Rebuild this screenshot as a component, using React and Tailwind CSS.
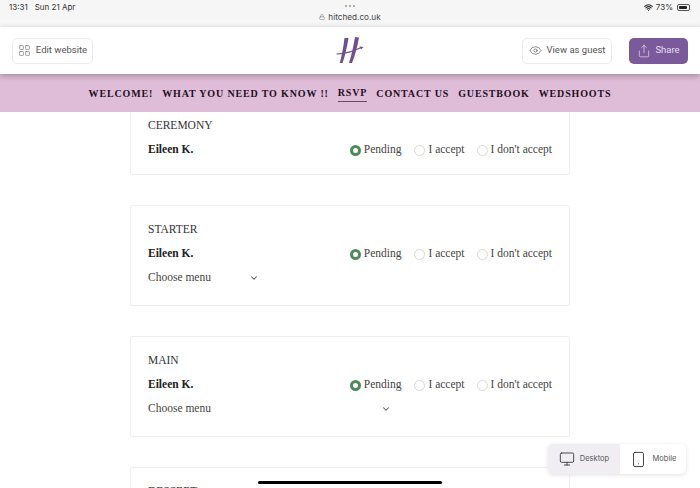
import React from "react";
import { LayoutGrid, Eye, Share, Monitor, Smartphone, ChevronDown, Lock, Wifi } from "lucide-react";

const serif = "font-['Liberation_Serif',_serif]";

function Radio({ label, checked, className = "" }) {
  return (
    <div className={`flex items-center gap-[3px] ${className}`}>
      {checked ? (
        <span className="w-[11px] h-[11px] rounded-full border-[3px] border-[#4f8a5b] bg-white" />
      ) : (
        <span className="w-[11px] h-[11px] rounded-full border border-[#d8d8d8] bg-white" />
      )}
      <span className="text-[11.5px] leading-none text-[#444]">{label}</span>
    </div>
  );
}

function Card({ title, row = true, menu, chevron, className = "" }) {
  return (
    <section className={`w-[440px] mx-auto bg-white border border-[#efefef] rounded-[2px] px-[17px] shrink-0 ${className}`}>
      <h3 className="h-[14px] flex items-center text-[11.5px] leading-none text-[#333]">{title}</h3>
      {row && (
        <div className="mt-[10px] h-[14px] flex items-center justify-between">
          <span className="text-[11.5px] font-bold leading-none text-[#222]">Eileen K.</span>
          <div className="flex items-center">
            <Radio label="Pending" checked />
            <Radio label="I accept" className="ml-[13px]" />
            <Radio label="I don't accept" className="ml-[12px]" />
          </div>
        </div>
      )}
      {menu && (
        <div className="mt-[10px] h-[14px] flex items-center text-[11.5px] leading-none text-[#444]" style={{ width: chevron }}>
          <span className="flex-1">Choose menu</span>
          <ChevronDown size={10} strokeWidth={2.5} className="text-[#555]" />
        </div>
      )}
    </section>
  );
}

function Logo() {
  return (
    <svg width="28" height="28" viewBox="0 0 28 28" fill="none">
      <path d="M8.5 2 L12.5 2 C11 11 9 20 6.5 27 L3.8 27 C6 19 7.5 10 8.5 2 Z" fill="#6f4f94" />
      <path d="M19 1 L23 1.5 C21.5 10 19 20 16 27 L13 27 C15.5 19 17.5 10 19 1 Z" fill="#6f4f94" />
      <path d="M1 18 C9 17.5 18 15 24 12" stroke="#6f4f94" strokeWidth="1.2" strokeLinecap="round" />
      <path d="M23.5 10.5 L27.5 11 L25 13.5 Z" fill="#6f4f94" />
    </svg>
  );
}

const navItems = ["WELCOME!", "WHAT YOU NEED TO KNOW !!", "RSVP", "CONTACT US", "GUESTBOOK", "WEDSHOOTS"];

export default function App() {
  return (
    <div className={`relative w-[700px] h-[488px] overflow-hidden bg-white flex flex-col font-['Inter',_sans-serif]`}>
      <div className="relative h-[27px] shrink-0 bg-[#f6f6f6] flex items-start justify-between pl-[9px] pr-[10px] pt-[3px] text-[8px] leading-[9px] text-[#333]">
        <div className="flex gap-[7px]">
          <span>13:31</span>
          <span>Sun 21 Apr</span>
        </div>
        <div className="flex flex-col items-center absolute left-0 right-0 top-[5px]">
          <div className="flex gap-[2px] mb-[5px]">
            <i className="w-[2px] h-[2px] rounded-full bg-[#999]" />
            <i className="w-[2px] h-[2px] rounded-full bg-[#999]" />
            <i className="w-[2px] h-[2px] rounded-full bg-[#999]" />
          </div>
          <div className="flex items-center gap-[3px] text-[8.2px] leading-[10px] text-[#444]">
            <Lock size={6} className="text-[#777]" />
            <span>hitched.co.uk</span>
          </div>
        </div>
        <div className="flex items-center gap-[3px] relative">
          <Wifi size={9} strokeWidth={3} />
          <span>73%</span>
          <span className="w-[13px] h-[7px] rounded-[2px] border border-[#555] p-[1px] flex ml-[1px]">
            <span className="w-[8px] bg-[#222] rounded-[1px]" />
          </span>
        </div>
      </div>

      <header className="relative z-20 h-[47px] shrink-0 bg-white flex items-center justify-between px-[12px] shadow-[0_2px_6px_rgba(60,40,60,0.35)] font-['Roboto',_sans-serif]">
        <button className="h-[26px] w-[81px] rounded-[5px] border border-[#ececec] flex items-center justify-center gap-[5px] text-[9.5px] text-[#555]">
          <LayoutGrid size={13} strokeWidth={1} />
          <span>Edit website</span>
        </button>
        <div className="absolute left-[336px] top-[9px]"><Logo /></div>
        <div className="flex items-center gap-[17px]">
          <button className="h-[26px] w-[90px] rounded-[5px] border border-[#ececec] flex items-center justify-center gap-[5px] text-[9.5px] text-[#555]">
            <Eye size={13} strokeWidth={1.2} />
            <span>View as guest</span>
          </button>
          <button className="h-[26px] w-[59px] rounded-[5px] bg-[#7a5a9b] flex items-center justify-center gap-[4px] text-[9.5px] text-[#e6dfee]">
            <Share size={14} strokeWidth={1.2} />
            <span>Share</span>
          </button>
        </div>
      </header>

      <nav className={`relative z-10 h-[38px] shrink-0 bg-[#dfbdd9] flex items-center justify-center gap-[9px] ${serif}`}>
        {navItems.map((n) => (
          <span
            key={n}
            className={`h-[18px] flex items-center text-[10px] font-bold tracking-[0.85px] text-[#1d0f1e] ${n === "RSVP" ? "border-b border-[#6b4a70]" : ""}`}
          >
            {n}
          </span>
        ))}
      </nav>

      <main className={`flex-1 min-h-0 flex flex-col gap-[30px] ${serif}`}>
        <Card title="CEREMONY" className="-mt-[12px] pt-[18px] h-[75px]" />
        <Card title="STARTER" menu chevron="111px" className="pt-[17px] h-[101px]" />
        <Card title="MAIN" menu chevron="243px" className="pt-[17px] h-[101px]" />
        <Card title="DESSERT" row={false} className="pt-[17px] h-[40px]" />
      </main>

      <div className="absolute left-[548px] top-[444px] w-[138px] h-[30px] rounded-[5px] bg-white shadow-[0_1px_4px_rgba(0,0,0,0.12)] flex text-[7.5px] text-[#555]">
        <div className="w-[72px] bg-[#f0eef3] rounded-l-[5px] flex items-center justify-center gap-[5px]">
          <Monitor size={16} strokeWidth={1.2} className="text-[#222]" />
          <span>Desktop</span>
        </div>
        <div className="flex-1 flex items-center justify-center gap-[6px]">
          <Smartphone size={17} strokeWidth={1.2} className="text-[#222]" />
          <span>Mobile</span>
        </div>
      </div>

      <div className="absolute left-[258px] top-[481px] w-[184px] h-[3px] rounded-full bg-black" />
    </div>
  );
}
